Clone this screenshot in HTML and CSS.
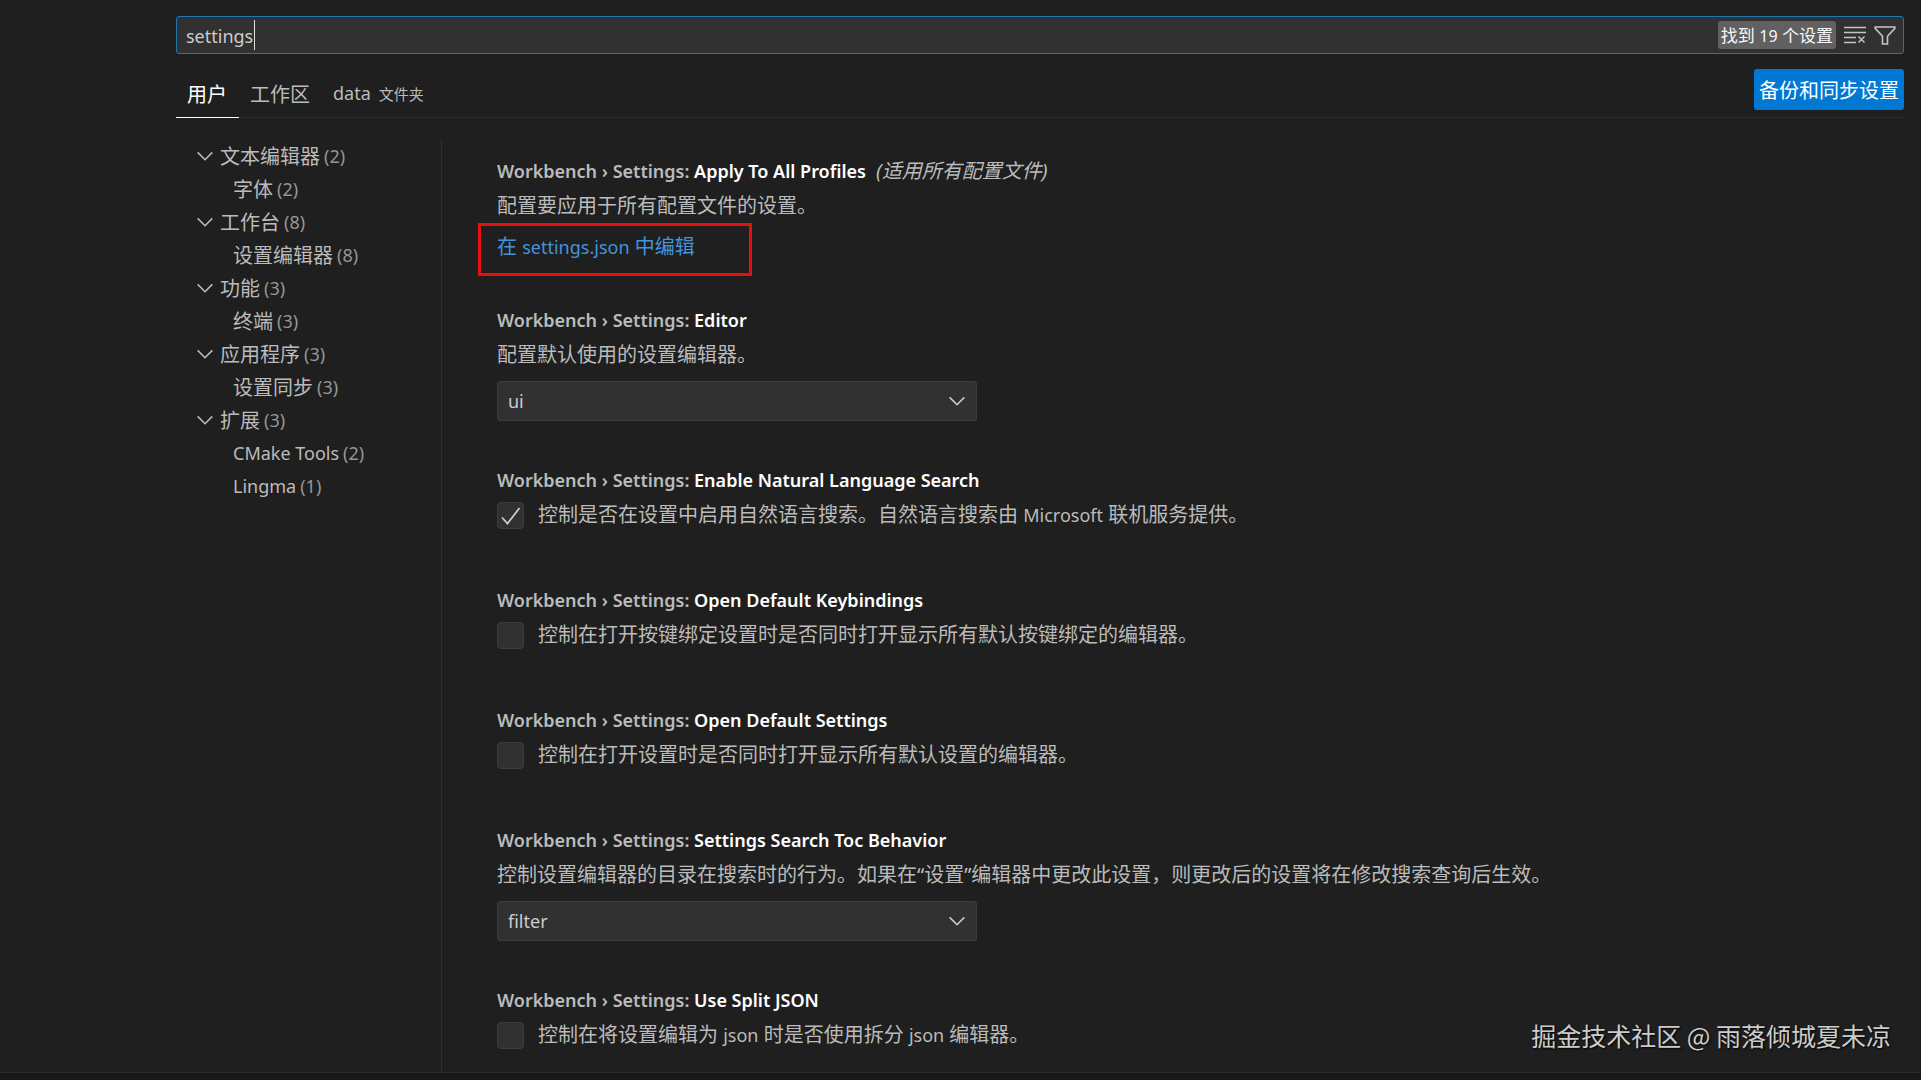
FILE: index.html
```html
<!DOCTYPE html>
<html lang="zh-CN">
<head>
<meta charset="utf-8">
<title>设置</title>
<link rel="stylesheet" href="styles.css">
</head>
<body>
<svg class="sprite" aria-hidden="true">
  <symbol id="chevron" viewBox="0 0 16 16"><path d="M1.500 4.800 8 11.300l6.500-6.500" fill="none" stroke="currentColor" stroke-width="1.400"/></symbol>
</svg>
<div class="editor">
  <header class="header">
    <div class="search">
      <input class="search-input" type="text" value="settings" aria-label="搜索设置" spellcheck="false">
      <span class="caret"></span>
      <span class="count-badge">找到 <span class="count-number">19</span> 个设置</span>
      <button class="icon-button" type="button" aria-label="清除设置搜索输入">
        <svg width="22" height="18" viewBox="0 0 22 18" fill="none" stroke="currentColor" stroke-width="1.500"><path d="M0 1.500h22M0 6.500h22M0 11.500h12M0 16.500h12M14.500 10.500l6 6M20.500 10.500l-6 6"/></svg>
      </button>
      <button class="icon-button" type="button" aria-label="筛选设置">
        <svg width="22" height="19" viewBox="0 0 22 19" fill="none" stroke="currentColor" stroke-width="1.600"><path d="M1.200 1h19.600v1.400l-7.300 7.800v7.800h-5v-7.800L1.200 2.400z"/></svg>
      </button>
    </div>
    <div class="tab-bar">
      <nav class="tabs">
        <button class="tab active" type="button">用户</button>
        <button class="tab" type="button">工作区</button>
        <button class="tab" type="button"><span class="latin">data</span><span class="tab-note">文件夹</span></button>
      </nav>
      <button class="sync-button" type="button">备份和同步设置</button>
    </div>
  </header>
  <div class="body">
    <nav class="toc">
      <a class="toc-row" href="#"><svg class="twistie"><use href="#chevron"/></svg>文本编辑器<span class="toc-count">(2)</span></a>
      <a class="toc-row child" href="#">字体<span class="toc-count">(2)</span></a>
      <a class="toc-row" href="#"><svg class="twistie"><use href="#chevron"/></svg>工作台<span class="toc-count">(8)</span></a>
      <a class="toc-row child" href="#">设置编辑器<span class="toc-count">(8)</span></a>
      <a class="toc-row" href="#"><svg class="twistie"><use href="#chevron"/></svg>功能<span class="toc-count">(3)</span></a>
      <a class="toc-row child" href="#">终端<span class="toc-count">(3)</span></a>
      <a class="toc-row" href="#"><svg class="twistie"><use href="#chevron"/></svg>应用程序<span class="toc-count">(3)</span></a>
      <a class="toc-row child" href="#">设置同步<span class="toc-count">(3)</span></a>
      <a class="toc-row" href="#"><svg class="twistie"><use href="#chevron"/></svg>扩展<span class="toc-count">(3)</span></a>
      <a class="toc-row child" href="#"><span class="latin">CMake Tools</span><span class="toc-count">(2)</span></a>
      <a class="toc-row child" href="#"><span class="latin">Lingma</span><span class="toc-count">(1)</span></a>
    </nav>
    <main class="settings">
      <section class="setting">
        <h2 class="title">Workbench › Settings: <span class="name">Apply To All Profiles</span><em class="scope">(适用所有配置文件)</em></h2>
        <p class="description">配置要应用于所有配置文件的设置。</p>
        <a class="edit-link" href="#">在 <span class="latin">settings.json</span> 中编辑</a>
        <span class="highlight"></span>
      </section>
      <section class="setting">
        <h2 class="title">Workbench › Settings: <span class="name">Editor</span></h2>
        <label class="description" for="editor">配置默认使用的设置编辑器。</label>
        <div class="dropdown">
          <select id="editor"><option>ui</option><option>json</option></select>
          <svg class="arrow"><use href="#chevron"/></svg>
        </div>
      </section>
      <section class="setting">
        <h2 class="title">Workbench › Settings: <span class="name">Enable Natural Language Search</span></h2>
        <label class="description check"><input type="checkbox" checked><span>控制是否在设置中启用自然语言搜索。自然语言搜索由 <span class="latin">Microsoft</span> 联机服务提供。</span></label>
      </section>
      <section class="setting">
        <h2 class="title">Workbench › Settings: <span class="name">Open Default Keybindings</span></h2>
        <label class="description check"><input type="checkbox"><span>控制在打开按键绑定设置时是否同时打开显示所有默认按键绑定的编辑器。</span></label>
      </section>
      <section class="setting">
        <h2 class="title">Workbench › Settings: <span class="name">Open Default Settings</span></h2>
        <label class="description check"><input type="checkbox"><span>控制在打开设置时是否同时打开显示所有默认设置的编辑器。</span></label>
      </section>
      <section class="setting">
        <h2 class="title">Workbench › Settings: <span class="name">Settings Search Toc Behavior</span></h2>
        <label class="description" for="toc-behavior">控制设置编辑器的目录在搜索时的行为。如果在“设置”编辑器中更改此设置，则更改后的设置将在修改搜索查询后生效。</label>
        <div class="dropdown">
          <select id="toc-behavior"><option>filter</option><option>hide</option></select>
          <svg class="arrow"><use href="#chevron"/></svg>
        </div>
      </section>
      <section class="setting">
        <h2 class="title">Workbench › Settings: <span class="name">Use Split JSON</span></h2>
        <label class="description check"><input type="checkbox"><span>控制在将设置编辑为 <span class="latin">json</span> 时是否使用拆分 <span class="latin">json</span> 编辑器。</span></label>
      </section>
    </main>
  </div>
</div>
<footer class="panel-edge"></footer>
<div class="watermark">掘金技术社区 @ 雨落倾城夏未凉</div>
</body>
</html>
```
FILE: styles.css
```css
* {
  box-sizing: border-box;
}

body {
  margin: 0;
  height: 100vh;
  display: flex;
  flex-direction: column;
  overflow: hidden;
  background: #1f1f1f;
  color: #bbbbbb;
  font-family: "Noto Sans", "Noto Sans CJK SC", sans-serif;
  font-size: 20px;
}

button,
input,
select {
  font: inherit;
  color: inherit;
}

button {
  padding: 0;
  border: 0;
  background: none;
}

a {
  color: inherit;
  text-decoration: none;
}

.sprite {
  display: none;
}

.latin {
  font-size: 18px;
}

.editor {
  flex: 1;
  min-height: 0;
  display: flex;
  flex-direction: column;
  padding: 16px 17px 0 176px;
}

/* Search box */

.search {
  position: relative;
  display: flex;
  align-items: center;
  height: 38px;
  padding: 0 7px 0 9px;
  border: 1px solid #2077b0;
  border-radius: 3px;
  background: #313131;
}

.search-input {
  flex: 1;
  min-width: 0;
  padding: 2px 0 0;
  border: 0;
  outline: 0;
  background: none;
  color: #cccccc;
  font-size: 18px;
}

.caret {
  position: absolute;
  left: 77px;
  top: 3px;
  width: 1px;
  height: 30px;
  background: #e0e0e0;
}

.count-badge {
  height: 28px;
  padding: 1px 3px 0;
  border-radius: 3px;
  background: #616161;
  color: #f8f8f8;
  font-size: 17px;
  line-height: 28px;
}

.count-number {
  font-size: 16px;
}

.icon-button {
  display: flex;
  margin-left: 8px;
  color: #c5c5c5;
}

/* Tabs */

.tab-bar {
  display: flex;
  justify-content: space-between;
  align-items: flex-start;
  height: 64px;
  padding-top: 15px;
  border-bottom: 1px solid #2b2b2b;
}

.tabs {
  display: flex;
  height: 49px;
}

.tab {
  display: flex;
  align-items: center;
  gap: 8px;
  padding: 0 12px 0 11px;
  border-bottom: 1px solid transparent;
}

.tab.active {
  border-color: #ffffff;
  color: #ffffff;
}

.tab-note {
  font-size: 15px;
}

.sync-button {
  height: 41px;
  padding: 0 5px;
  border-radius: 3px;
  background: #0078d4;
  color: #ffffff;
}

/* Table of contents */

.body {
  flex: 1;
  min-height: 0;
  display: flex;
  padding-top: 21px;
}

.toc {
  flex: 0 0 266px;
  border-right: 1px solid #2f2f2f;
}

.toc-row {
  display: flex;
  align-items: center;
  height: 33px;
  padding-left: 20px;
}

.toc-row.child {
  padding-left: 57px;
}

.twistie {
  width: 18px;
  height: 18px;
  margin-right: 6px;
}

.toc-count {
  margin-left: 4px;
  color: #969696;
  font-size: 18px;
}

/* Settings list */

.settings {
  flex: 1;
  min-width: 0;
  overflow: hidden;
  padding: 14px 0 0 55px;
}

.setting {
  position: relative;
  padding-bottom: 41px;
}

.title {
  margin: 0;
  font-size: 18px;
  font-weight: 600;
  line-height: 36px;
  height: 36px;
}

.name {
  color: #ffffff;
}

.scope {
  margin-left: 10px;
  font-size: 20px;
  font-weight: 400;
}

.description {
  display: block;
  height: 34px;
  margin: 0 0 9px;
  line-height: 34px;
  white-space: nowrap;
}

.check {
  display: flex;
  align-items: center;
  gap: 14px;
}

.check input {
  appearance: none;
  width: 27px;
  height: 27px;
  margin: 0;
  border: 1px solid #3c3c3c;
  border-radius: 4px;
  background: #313131;
}

.check input:checked {
  background: #313131 url("data:image/svg+xml,%3Csvg xmlns='http://www.w3.org/2000/svg' viewBox='0 0 25 25'%3E%3Cpath d='M4 14.500 9.500 20.500 21.500 5' fill='none' stroke='%23cccccc' stroke-width='1.800'/%3E%3C/svg%3E") center / 25px 25px no-repeat;
}

.edit-link {
  display: block;
  color: #4295db;
  line-height: 29px;
  height: 29px;
}

.highlight {
  position: absolute;
  left: -19px;
  top: 70px;
  width: 274px;
  height: 53px;
  border: 3px solid #e8100f;
}

.dropdown {
  position: relative;
  max-width: 480px;
}

.dropdown select {
  display: block;
  appearance: none;
  width: 100%;
  height: 40px;
  padding: 0 10px;
  border: 1px solid #3c3c3c;
  border-radius: 3px;
  background: #313131;
  color: #cccccc;
  font-size: 18px;
}

.arrow {
  position: absolute;
  right: 11px;
  top: 11px;
  width: 18px;
  height: 18px;
  color: #cccccc;
  pointer-events: none;
}

.panel-edge {
  height: 8px;
  border-top: 1px solid #2b2b2b;
  background: #181818;
}

.watermark {
  position: absolute;
  right: 30px;
  bottom: 26px;
  color: #cccccc;
  font-family: "Noto Sans CJK SC", sans-serif;
  font-size: 25px;
  line-height: 38px;
  text-shadow: 1px 1px 2px #000000;
}
```
